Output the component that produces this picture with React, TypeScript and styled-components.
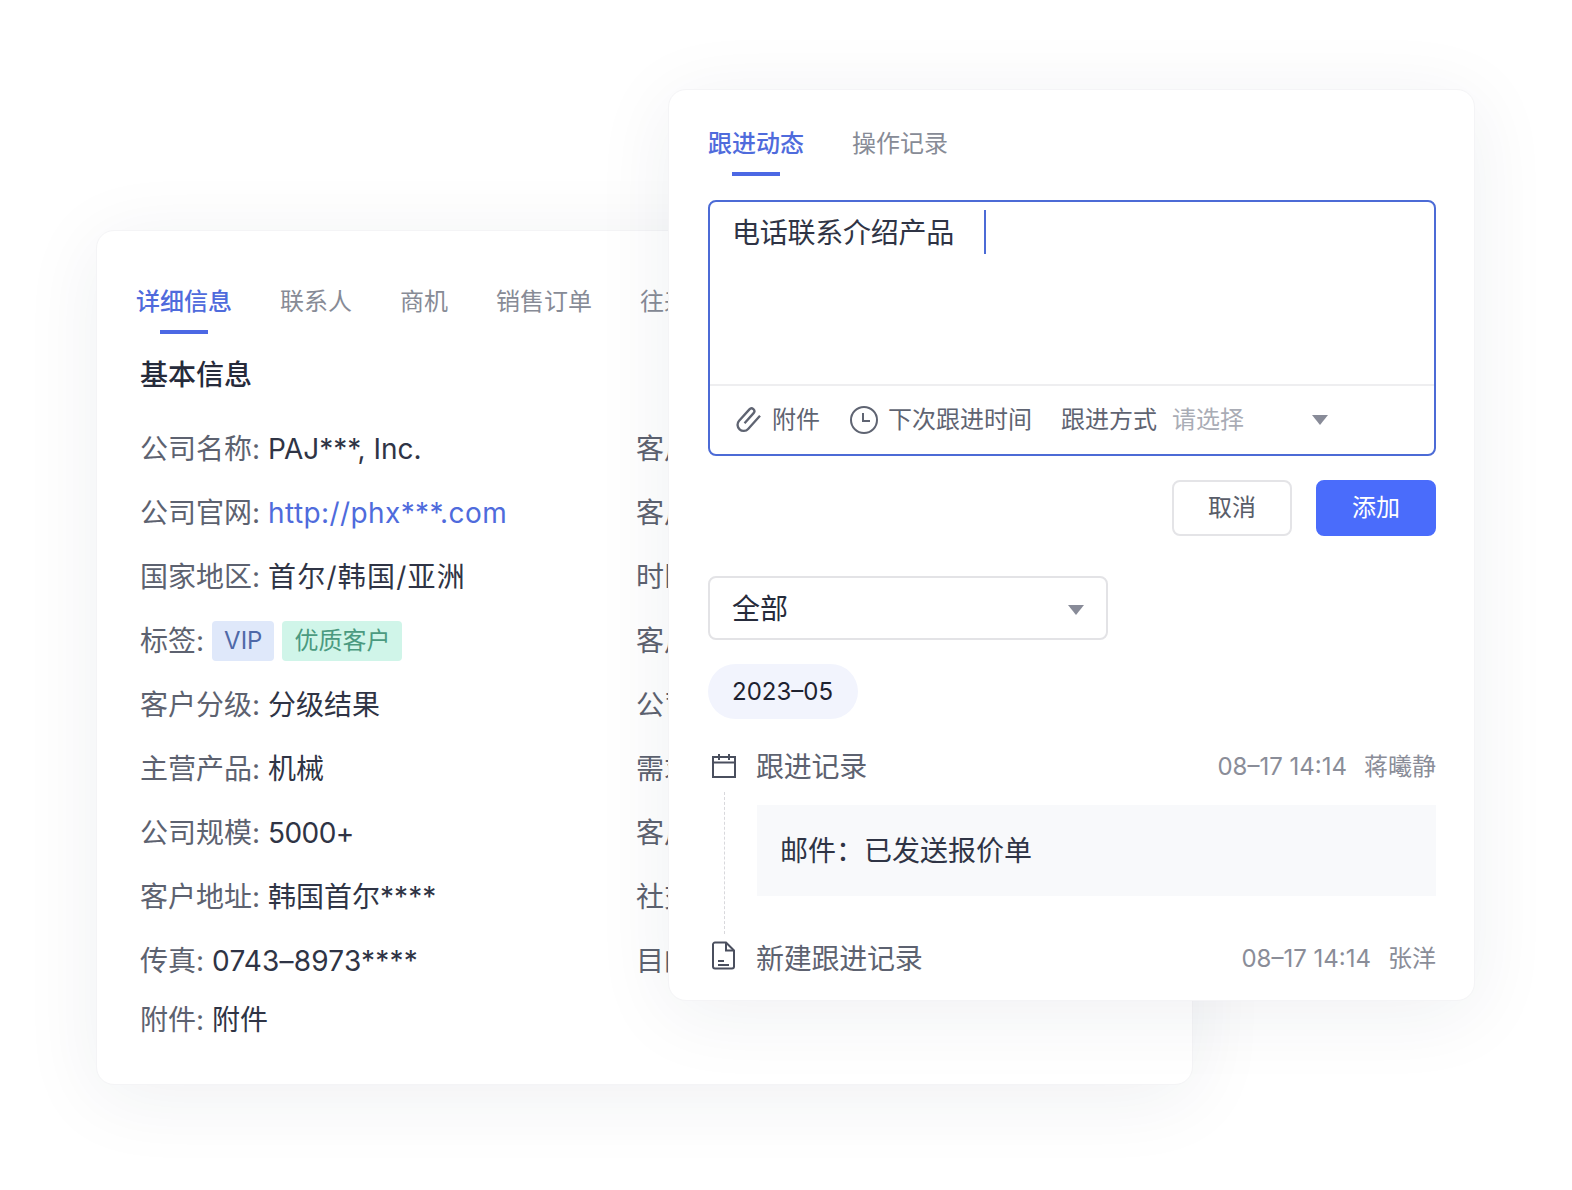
import React from "react";
import styled, { createGlobalStyle } from "styled-components";

const Global = createGlobalStyle`
  html, body { margin: 0; padding: 0; background: #fff; }
  body { font-family: Inter, "Noto Sans CJK SC", sans-serif; line-height: 1.4; overflow: hidden; }
  * { box-sizing: border-box; }
`;

const Canvas = styled.div`
  position: relative;
  width: 1572px;
  height: 1190px;
  background: #fff;
  overflow: hidden;
`;

const Card = styled.section<{ $x: number; $y: number; $w: number; $h: number; $z: number }>`
  position: absolute;
  left: ${(p) => p.$x}px;
  top: ${(p) => p.$y}px;
  width: ${(p) => p.$w}px;
  height: ${(p) => p.$h}px;
  z-index: ${(p) => p.$z};
  background: #fff;
  border-radius: 18px;
  border: 1px solid #f4f4f6;
  box-shadow: 0 12px 80px rgba(30, 40, 70, 0.07);
  overflow: hidden;
`;

const BackInner = styled.div`
  padding: 53px 0 0 39px;
`;

const FrontInner = styled.div`
  padding: 36px 38px 0 39px;
`;

const TabBar = styled.div`
  display: flex;
  gap: 48px;
  height: 52px;
  white-space: nowrap;
`;

const Tab = styled.div<{ $active?: boolean }>`
  position: relative;
  font-size: 24px;
  line-height: 36px;
  font-weight: ${(p) => (p.$active ? 500 : 400)};
  color: ${(p) => (p.$active ? "#4f6bdc" : "#878b96")};
  &::after {
    content: ${(p) => (p.$active ? '""' : "none")};
    position: absolute;
    left: 50%;
    transform: translateX(-50%);
    bottom: 2px;
    width: 48px;
    height: 4px;
    background: #4c68e4;
  }
`;

const Heading = styled.h2`
  margin: 0 0 0 4px;
  padding-top: 18px;
  font-size: 28px;
  line-height: 42px;
  font-weight: 500;
  color: #262b3b;
`;

const Fields = styled.div`
  display: grid;
  grid-template-columns: 496px 1fr;
  margin: 22px 0 0 4px;
`;

const Field = styled.div`
  display: flex;
  align-items: center;
  height: 64px;
  font-size: 28px;
  white-space: nowrap;
  color: #5d6270;
`;

const LastField = styled(Field)`
  height: 54px;
`;

const Value = styled.span<{ $link?: boolean; $track?: number }>`
  margin-left: 8px;
  letter-spacing: ${(p) => p.$track ?? 0}px;
  color: ${(p) => (p.$link ? "#4f6bdc" : "#2f3445")};
`;

const Tag = styled.span<{ $tone: "blue" | "green" }>`
  display: inline-flex;
  align-items: center;
  height: 40px;
  padding: 0 12px;
  margin: 0 0 3px 8px;
  border-radius: 4px;
  font-size: 24px;
  background: ${(p) => (p.$tone === "blue" ? "#dfe8fa" : "#d0f5e9")};
  color: ${(p) => (p.$tone === "blue" ? "#4f69a8" : "#4b9a80")};
`;

const Editor = styled.div`
  margin-top: 22px;
  height: 256px;
  border: 2px solid #4c6bd6;
  border-radius: 8px;
`;

const EditorBody = styled.div`
  display: flex;
  height: 184px;
  padding: 8px 0 0 22px;
  border-bottom: 2px solid #eeeef0;
`;

const EditorText = styled.div`
  margin-top: 1px;
  font-size: 28px;
  line-height: 44px;
  letter-spacing: -0.25px;
  color: #2f3445;
`;

const Caret = styled.div`
  width: 2px;
  height: 44px;
  margin-left: 30px;
  background: #4c6bd6;
`;

const Toolbar = styled.div`
  display: flex;
  align-items: center;
  height: 68px;
  padding-left: 24px;
  font-size: 24px;
  color: #5f6472;
  white-space: nowrap;
`;

const ToolItem = styled.div<{ $w: number }>`
  display: flex;
  align-items: center;
  gap: 10px;
  width: ${(p) => p.$w}px;
`;

const Placeholder = styled.span`
  width: 140px;
  margin-left: 15px;
  color: #a9acb5;
`;

const Arrow = styled.span`
  width: 0;
  height: 0;
  border-left: 8.5px solid transparent;
  border-right: 8.5px solid transparent;
  border-top: 10px solid #888b98;
`;

const Actions = styled.div`
  display: flex;
  justify-content: flex-end;
  gap: 24px;
  margin-top: 24px;
`;

const Button = styled.button<{ $primary?: boolean }>`
  width: 120px;
  height: 56px;
  border-radius: 8px;
  padding: 0;
  font: inherit;
  font-size: 24px;
  color: ${(p) => (p.$primary ? "#fff" : "#595d69")};
  background: ${(p) => (p.$primary ? "#4a6cfb" : "#fff")};
  border: 2px solid ${(p) => (p.$primary ? "#4a6cfb" : "#e4e4e7")};
`;

const Select = styled.div`
  display: flex;
  align-items: center;
  justify-content: space-between;
  width: 400px;
  height: 64px;
  margin-top: 40px;
  padding: 3px 22px 0 22px;
  border: 2px solid #e3e3e6;
  border-radius: 8px;
  font-size: 28px;
  color: #262b3b;
`;

const Pill = styled.div`
  display: inline-flex;
  align-items: center;
  height: 55px;
  margin-top: 24px;
  padding: 0 25px 0 24px;
  border-radius: 28px;
  background: #f2f4fd;
  font-size: 24px;
  color: #1e2230;
`;

const RecordHead = styled.div<{ $top: number }>`
  display: flex;
  align-items: center;
  height: 40px;
  margin-top: ${(p) => p.$top}px;
`;

const IconSlot = styled.div<{ $lift?: number }>`
  display: flex;
  justify-content: center;
  width: 32px;
  margin-right: 16px;
  margin-bottom: ${(p) => p.$lift ?? 0}px;
  flex: none;
  color: #4a4f5e;
`;

const RecordTitle = styled.div`
  flex: 1;
  padding-top: 3px;
  font-size: 28px;
  letter-spacing: -0.25px;
  color: #5d6270;
`;

const RecordMeta = styled.div`
  display: flex;
  gap: 17px;
  padding-top: 1px;
  font-size: 24px;
  color: #8a8d98;
  white-space: nowrap;
`;

const RecordBody = styled.div`
  display: flex;
  height: 152px;
`;

const Rail = styled.div`
  width: 1px;
  height: 142px;
  margin: 6px 32px 0 16px;
  border-left: 1px dashed #d8d8dc;
  flex: none;
`;

const Note = styled.div`
  display: flex;
  align-items: center;
  flex: 1;
  height: 91px;
  margin-top: 19px;
  padding: 2px 0 0 23px;
  background: #f8f9fb;
  font-size: 28px;
  color: #2f3445;
`;

const Icon = styled.svg`
  display: block;
  flex: none;
  fill: none;
  stroke: currentColor;
  stroke-width: 2;
`;

const ClipIcon = styled(Icon)`
  stroke-width: 2.5;
`;

const left: [string, React.ReactNode][] = [
  ["公司名称:", <Value>PAJ***, Inc.</Value>],
  ["公司官网:", <Value $link $track={0.4}>http://phx***.com</Value>],
  ["国家地区:", <Value $track={1.2}>首尔/韩国/亚洲</Value>],
  ["标签:", <><Tag $tone="blue">VIP</Tag><Tag $tone="green">优质客户</Tag></>],
  ["客户分级:", <Value>分级结果</Value>],
  ["主营产品:", <Value>机械</Value>],
  ["公司规模:", <Value $track={-0.6}>5000+</Value>],
  ["客户地址:", <Value>韩国首尔****</Value>],
  ["传真:", <Value $track={0.2}>0743–8973****</Value>],
];

const right = ["客户:", "客户:", "时区:", "客户:", "公司:", "需求:", "客户:", "社交:", "目的:"];

export default function App() {
  return (
    <Canvas>
      <Global />
      <Card $x={96} $y={230} $w={1097} $h={855} $z={1}>
        <BackInner>
          <TabBar>
            <Tab $active>详细信息</Tab>
            <Tab>联系人</Tab>
            <Tab>商机</Tab>
            <Tab>销售订单</Tab>
            <Tab>往来邮件</Tab>
          </TabBar>
          <Heading>基本信息</Heading>
          <Fields>
            {left.map(([label, value], i) => (
              <React.Fragment key={label}>
                <Field>{label}{value}</Field>
                <Field>{right[i]}</Field>
              </React.Fragment>
            ))}
            <LastField>附件:<Value>附件</Value></LastField>
          </Fields>
        </BackInner>
      </Card>

      <Card $x={668} $y={89} $w={807} $h={912} $z={2}>
        <FrontInner>
          <TabBar>
            <Tab $active>跟进动态</Tab>
            <Tab>操作记录</Tab>
          </TabBar>
          <Editor>
            <EditorBody>
              <EditorText>电话联系介绍产品</EditorText>
              <Caret />
            </EditorBody>
            <Toolbar>
              <ToolItem $w={116}>
                <ClipIcon width="28" height="28" viewBox="0 0 30 30">
                  <g transform="rotate(42 15 15) translate(6.5 -1)">
                    <path d="M15 4V23a6.5 6.5 0 0 1-13 0V6.5a3 3 0 0 1 6 0V21" />
                  </g>
                </ClipIcon>
                附件
              </ToolItem>
              <ToolItem $w={211}>
                <Icon width="28" height="28" viewBox="0 0 28 28">
                  <circle cx="14" cy="14" r="13" />
                  <path d="M13 7v8h7" />
                </Icon>
                下次跟进时间
              </ToolItem>
              跟进方式
              <Placeholder>请选择</Placeholder>
              <Arrow />
            </Toolbar>
          </Editor>
          <Actions>
            <Button>取消</Button>
            <Button $primary>添加</Button>
          </Actions>
          <Select>
            全部
            <Arrow />
          </Select>
          <Pill>2023–05</Pill>
          <RecordHead $top={27}>
            <IconSlot>
              <Icon width="26" height="26" viewBox="0 0 26 26">
                <rect x="2" y="4" width="22" height="20" />
                <path d="M2 9.5h22M8 1v6M18 1v6" />
              </Icon>
            </IconSlot>
            <RecordTitle>跟进记录</RecordTitle>
            <RecordMeta><span>08–17 14:14</span><span>蒋曦静</span></RecordMeta>
          </RecordHead>
          <RecordBody>
            <Rail />
            <Note>邮件：已发送报价单</Note>
          </RecordBody>
          <RecordHead $top={0}>
            <IconSlot $lift={6}>
              <Icon width="24" height="29" viewBox="0 0 24 29">
                <path d="M3 1.5h11l8 8v16a2 2 0 0 1-2 2H3a2 2 0 0 1-2-2v-22a2 2 0 0 1 2-2Z" />
                <path d="M14 1.5v8h8M6 20h6M6 24h11" />
              </Icon>
            </IconSlot>
            <RecordTitle>新建跟进记录</RecordTitle>
            <RecordMeta><span>08–17 14:14</span><span>张洋</span></RecordMeta>
          </RecordHead>
        </FrontInner>
      </Card>
    </Canvas>
  );
}
